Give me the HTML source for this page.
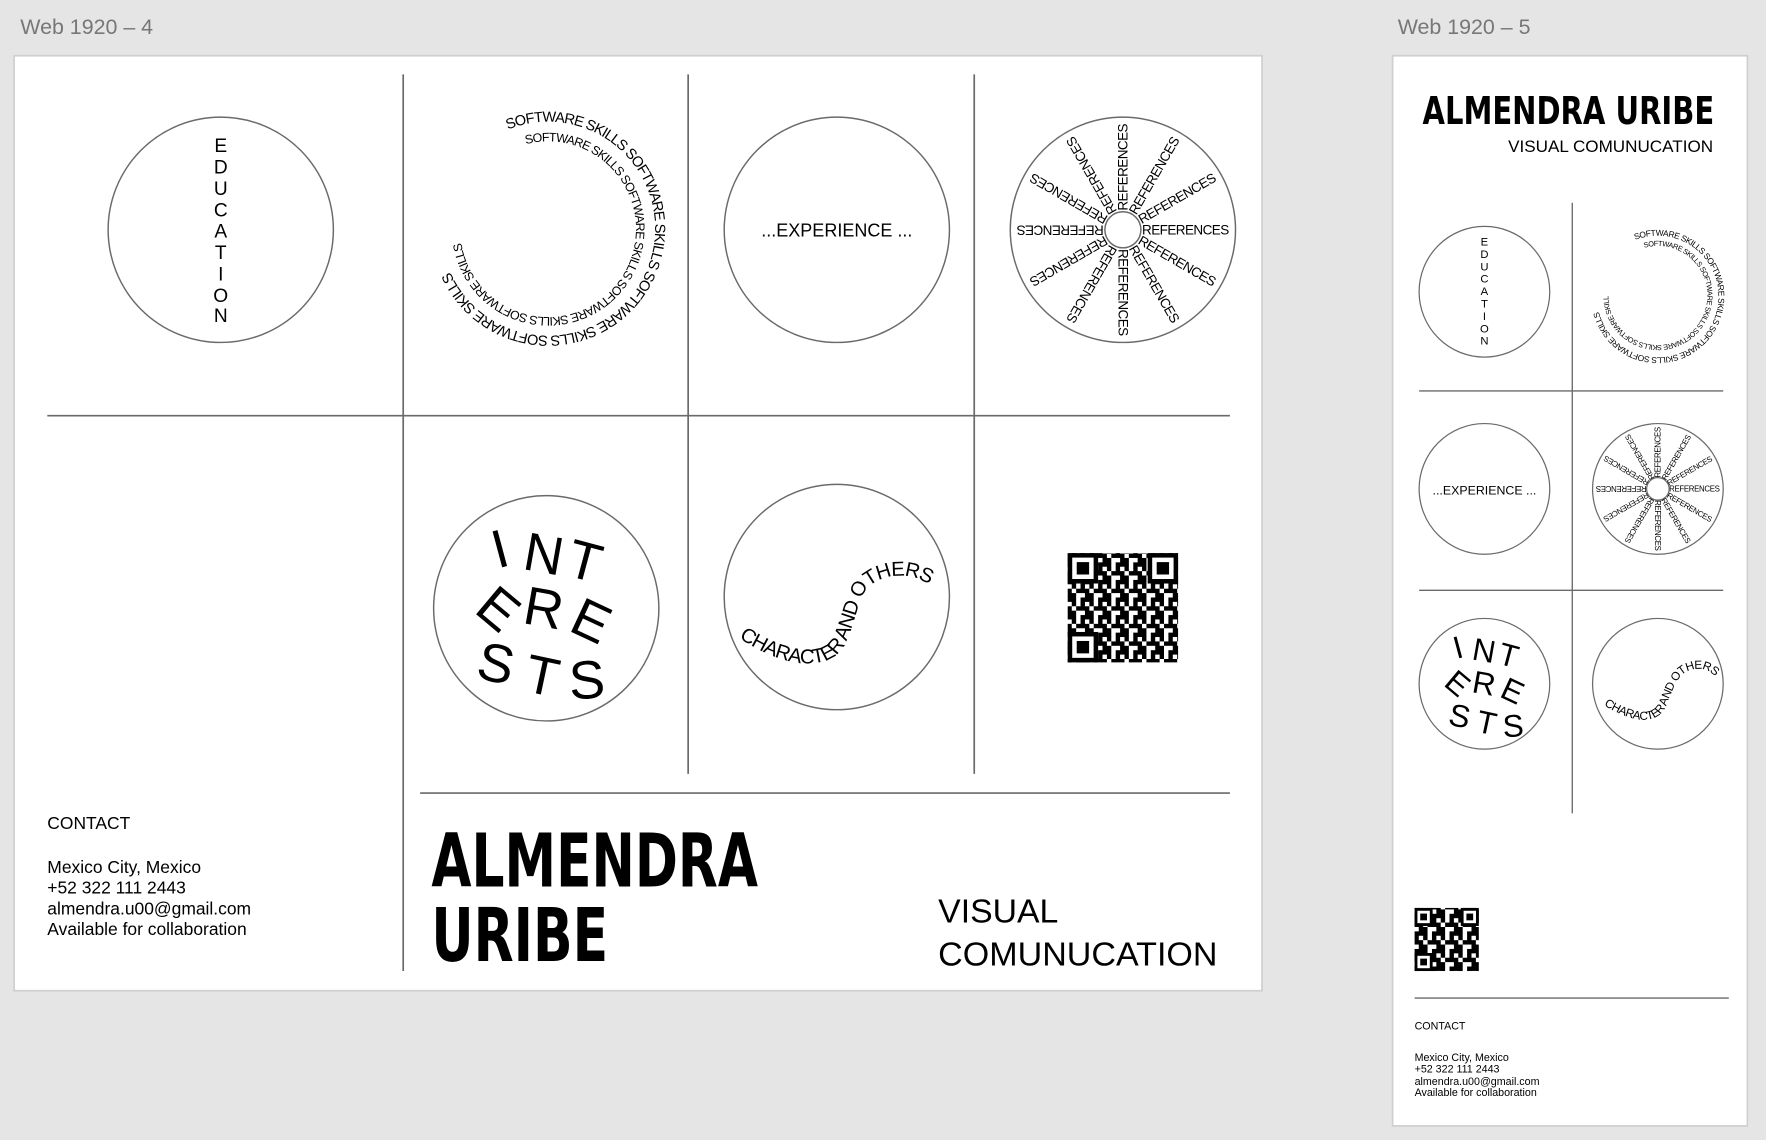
<!DOCTYPE html>
<html><head><meta charset="utf-8"><style>
html,body{margin:0;padding:0;background:#e5e5e5;}
svg{display:block;}
text{font-family:"Liberation Sans",sans-serif;}
.blk{font-family:"DejaVu Sans","Liberation Sans",sans-serif;font-weight:bold;}
</style></head><body>
<svg width="1766" height="1140" viewBox="0 0 1568 1012" preserveAspectRatio="none" xmlns="http://www.w3.org/2000/svg">
<defs>
<pattern id="qr" width="15.6" height="15.6" patternUnits="userSpaceOnUse">
<rect width="15.6" height="15.6" fill="#fff"/>
<rect x="0" y="0" width="3.9" height="7.8" fill="#000"/>
<rect x="7.8" y="0" width="7.8" height="3.9" fill="#000"/>
<rect x="3.9" y="7.8" width="7.8" height="3.9" fill="#000"/>
<rect x="11.7" y="7.8" width="3.9" height="7.8" fill="#000"/>
<rect x="0" y="11.7" width="3.9" height="3.9" fill="#000"/>
<rect x="7.8" y="3.9" width="3.9" height="3.9" fill="#000"/>
</pattern>
<path id="sw1" d="M451,115 A95,95 0 1 1 392,195"/>
<path id="sw2" d="M467,128 A78,78 0 1 1 410,189"/>
<path id="ch" d="M656,566 C690,590 735,600 750,572 C762,548 762,525 775,518 C795,505 825,510 842,535"/>
<path id="ch2" d="M1424,626 C1450,642 1474,646 1481,622 C1488,606 1490,600 1498,596 C1512,590 1522,596 1530,610"/>
<path id="sw3" d="M1452,213 A54,54 0 1 1 1418,259"/>
<path id="sw4" d="M1460,220 A44,44 0 1 1 1428,262"/>
</defs>

<text x="18" y="30" font-size="19" fill="#777">Web 1920 – 4</text>
<text x="1241" y="30" font-size="19" fill="#777">Web 1920 – 5</text>

<!-- Frame 1 -->
<rect x="12.5" y="49.5" width="1108" height="830" fill="#fff" stroke="#cfcfcf" stroke-width="1.5"/>
<g stroke="#6a6a6a" stroke-width="1.5">
<line x1="358" y1="66" x2="358" y2="862"/>
<line x1="611" y1="66" x2="611" y2="687"/>
<line x1="865" y1="66" x2="865" y2="687"/>
<line x1="42" y1="369" x2="1092" y2="369"/>
<line x1="373" y1="704" x2="1092" y2="704"/>
</g>
<g fill="none" stroke="#6a6a6a" stroke-width="1.3">
<circle cx="196" cy="204" r="100"/>
<circle cx="743" cy="204" r="100"/>
<circle cx="997" cy="204" r="100"/>
<circle cx="485" cy="540" r="100"/>
<circle cx="743" cy="530" r="100"/>
<circle cx="997" cy="204" r="16"/>
</g>
<g font-size="17" text-anchor="middle" fill="#000">
<text x="196" y="135">E</text><text x="196" y="154">D</text><text x="196" y="173">U</text><text x="196" y="192">C</text><text x="196" y="211">A</text><text x="196" y="230">T</text><text x="196" y="249">I</text><text x="196" y="268">O</text><text x="196" y="286">N</text>
</g>
<text font-size="13" letter-spacing="-0.8"><textPath href="#sw1">SOFTWARE SKILLS SOFTWARE SKILLS SOFTWARE SKILLS SOFTWARE SKILLS</textPath></text>
<text font-size="11" letter-spacing="-0.7"><textPath href="#sw2">SOFTWARE SKILLS SOFTWARE SKILLS SOFTWARE SKILLS SOFTWARE SKILLS</textPath></text>
<text x="743" y="210" font-size="16" text-anchor="middle">...EXPERIENCE ...</text>
<g font-size="12" letter-spacing="-0.5">
<text transform="translate(997,204) rotate(0)" x="17" y="4">REFERENCES</text>
<text transform="translate(997,204) rotate(-30)" x="17" y="4">REFERENCES</text>
<text transform="translate(997,204) rotate(-60)" x="17" y="4">REFERENCES</text>
<text transform="translate(997,204) rotate(-90)" x="17" y="4">REFERENCES</text>
<text transform="translate(997,204) rotate(-120)" x="17" y="4">REFERENCES</text>
<text transform="translate(997,204) rotate(-150)" x="17" y="4">REFERENCES</text>
<text transform="translate(997,204) rotate(180)" x="17" y="4">REFERENCES</text>
<text transform="translate(997,204) rotate(150)" x="17" y="4">REFERENCES</text>
<text transform="translate(997,204) rotate(120)" x="17" y="4">REFERENCES</text>
<text transform="translate(997,204) rotate(90)" x="17" y="4">REFERENCES</text>
<text transform="translate(997,204) rotate(60)" x="17" y="4">REFERENCES</text>
<text transform="translate(997,204) rotate(30)" x="17" y="4">REFERENCES</text>
</g>
<g font-size="48" text-anchor="middle">
<text transform="translate(448,503) rotate(-15)">I</text>
<text transform="translate(480,508) rotate(10)">N</text>
<text transform="translate(515,514) rotate(15)">T</text>
<text transform="translate(432,553) rotate(40)">E</text>
<text transform="translate(480,556) rotate(10)">R</text>
<text transform="translate(518,566) rotate(25)">E</text>
<text transform="translate(437,605) rotate(12)">S</text>
<text transform="translate(478,616) rotate(12)">T</text>
<text transform="translate(522,620) rotate(-3)">S</text>
</g>
<text font-size="18" letter-spacing="-0.8"><textPath href="#ch">CHARACTER AND OTHERS</textPath></text>
<g>
<rect x="948" y="491" width="98" height="97" fill="url(#qr)"/>
<g fill="#000">
<rect x="948" y="491" width="27" height="27"/><rect x="952" y="495" width="19" height="19" fill="#fff"/><rect x="956" y="499" width="11" height="11"/>
<rect x="1019" y="491" width="27" height="27"/><rect x="1023" y="495" width="19" height="19" fill="#fff"/><rect x="1027" y="499" width="11" height="11"/>
<rect x="948" y="561" width="27" height="27"/><rect x="952" y="565" width="19" height="19" fill="#fff"/><rect x="956" y="569" width="11" height="11"/>
</g>
</g>
<g font-size="15.5">
<text x="42" y="736">CONTACT</text>
<text x="42" y="775">Mexico City, Mexico</text>
<text x="42" y="793">+52 322 111 2443</text>
<text x="42" y="812">almendra.u00@gmail.com</text>
<text x="42" y="830">Available for collaboration</text>
</g>
<g class="blk" font-size="66">
<text class="blk" x="383" y="787" textLength="290" lengthAdjust="spacingAndGlyphs">ALMENDRA</text>
<text class="blk" x="383" y="853" textLength="157" lengthAdjust="spacingAndGlyphs">URIBE</text>
</g>
<g font-size="30">
<text x="833" y="819">VISUAL</text>
<text x="833" y="857" textLength="248" lengthAdjust="spacingAndGlyphs">COMUNUCATION</text>
</g>

<!-- Frame 2 -->
<rect x="1236.5" y="49.5" width="315" height="950" fill="#fff" stroke="#cfcfcf" stroke-width="1.5"/>
<text class="blk" x="1263" y="110" font-size="34" textLength="259" lengthAdjust="spacingAndGlyphs">ALMENDRA URIBE</text>
<text x="1339" y="135" font-size="15" textLength="182" lengthAdjust="spacingAndGlyphs">VISUAL COMUNUCATION</text>
<g stroke="#6a6a6a" stroke-width="1.2">
<line x1="1396" y1="180" x2="1396" y2="722"/>
<line x1="1260" y1="347" x2="1530" y2="347"/>
<line x1="1260" y1="524" x2="1530" y2="524"/>
<line x1="1256" y1="886" x2="1535" y2="886"/>
</g>
<g fill="none" stroke="#6a6a6a" stroke-width="1.1">
<circle cx="1318" cy="259" r="58"/>
<circle cx="1318" cy="434" r="58"/>
<circle cx="1472" cy="434" r="58"/>
<circle cx="1318" cy="607" r="58"/>
<circle cx="1472" cy="607" r="58"/>
<circle cx="1472" cy="434" r="10"/>
</g>
<g font-size="10" text-anchor="middle">
<text x="1318" y="218">E</text><text x="1318" y="229">D</text><text x="1318" y="240">U</text><text x="1318" y="251">C</text><text x="1318" y="262">A</text><text x="1318" y="273">T</text><text x="1318" y="284">I</text><text x="1318" y="295">O</text><text x="1318" y="306">N</text>
</g>
<text font-size="7.5" letter-spacing="-0.4"><textPath href="#sw3">SOFTWARE SKILLS SOFTWARE SKILLS SOFTWARE SKILLS SOFTWARE SKILLS</textPath></text>
<text font-size="6.5" letter-spacing="-0.4"><textPath href="#sw4">SOFTWARE SKILLS SOFTWARE SKILLS SOFTWARE SKILLS SOFTWARE SKILLS</textPath></text>
<text x="1318" y="439" font-size="11" text-anchor="middle">...EXPERIENCE ...</text>
<g font-size="7" letter-spacing="-0.3">
<text transform="translate(1472,434) rotate(0)" x="10" y="2.5">REFERENCES</text>
<text transform="translate(1472,434) rotate(-30)" x="10" y="2.5">REFERENCES</text>
<text transform="translate(1472,434) rotate(-60)" x="10" y="2.5">REFERENCES</text>
<text transform="translate(1472,434) rotate(-90)" x="10" y="2.5">REFERENCES</text>
<text transform="translate(1472,434) rotate(-120)" x="10" y="2.5">REFERENCES</text>
<text transform="translate(1472,434) rotate(-150)" x="10" y="2.5">REFERENCES</text>
<text transform="translate(1472,434) rotate(180)" x="10" y="2.5">REFERENCES</text>
<text transform="translate(1472,434) rotate(150)" x="10" y="2.5">REFERENCES</text>
<text transform="translate(1472,434) rotate(120)" x="10" y="2.5">REFERENCES</text>
<text transform="translate(1472,434) rotate(90)" x="10" y="2.5">REFERENCES</text>
<text transform="translate(1472,434) rotate(60)" x="10" y="2.5">REFERENCES</text>
<text transform="translate(1472,434) rotate(30)" x="10" y="2.5">REFERENCES</text>
</g>
<g font-size="28" text-anchor="middle">
<text transform="translate(1297,584) rotate(-15)">I</text>
<text transform="translate(1316,587) rotate(10)">N</text>
<text transform="translate(1337,591) rotate(15)">T</text>
<text transform="translate(1288,614) rotate(40)">E</text>
<text transform="translate(1316,616) rotate(10)">R</text>
<text transform="translate(1339,622) rotate(25)">E</text>
<text transform="translate(1294,645) rotate(12)">S</text>
<text transform="translate(1318,651) rotate(12)">T</text>
<text transform="translate(1344,654) rotate(-3)">S</text>
</g>
<text font-size="10.5" letter-spacing="-0.5"><textPath href="#ch2">CHARACTER AND OTHERS</textPath></text>
<g>
<rect x="1256" y="806" width="57" height="56" fill="url(#qr)"/>
<g fill="#000">
<rect x="1256" y="806" width="16" height="16"/><rect x="1258.5" y="808.5" width="11" height="11" fill="#fff"/><rect x="1261" y="811" width="6" height="6"/>
<rect x="1297" y="806" width="16" height="16"/><rect x="1299.5" y="808.5" width="11" height="11" fill="#fff"/><rect x="1302" y="811" width="6" height="6"/>
<rect x="1256" y="846" width="16" height="16"/><rect x="1258.5" y="848.5" width="11" height="11" fill="#fff"/><rect x="1261" y="851" width="6" height="6"/>
</g>
</g>
<g font-size="9.5">
<text x="1256" y="914">CONTACT</text>
<text x="1256" y="942">Mexico City, Mexico</text>
<text x="1256" y="952">+52 322 111 2443</text>
<text x="1256" y="963">almendra.u00@gmail.com</text>
<text x="1256" y="973">Available for collaboration</text>
</g>
</svg>
</body></html>
